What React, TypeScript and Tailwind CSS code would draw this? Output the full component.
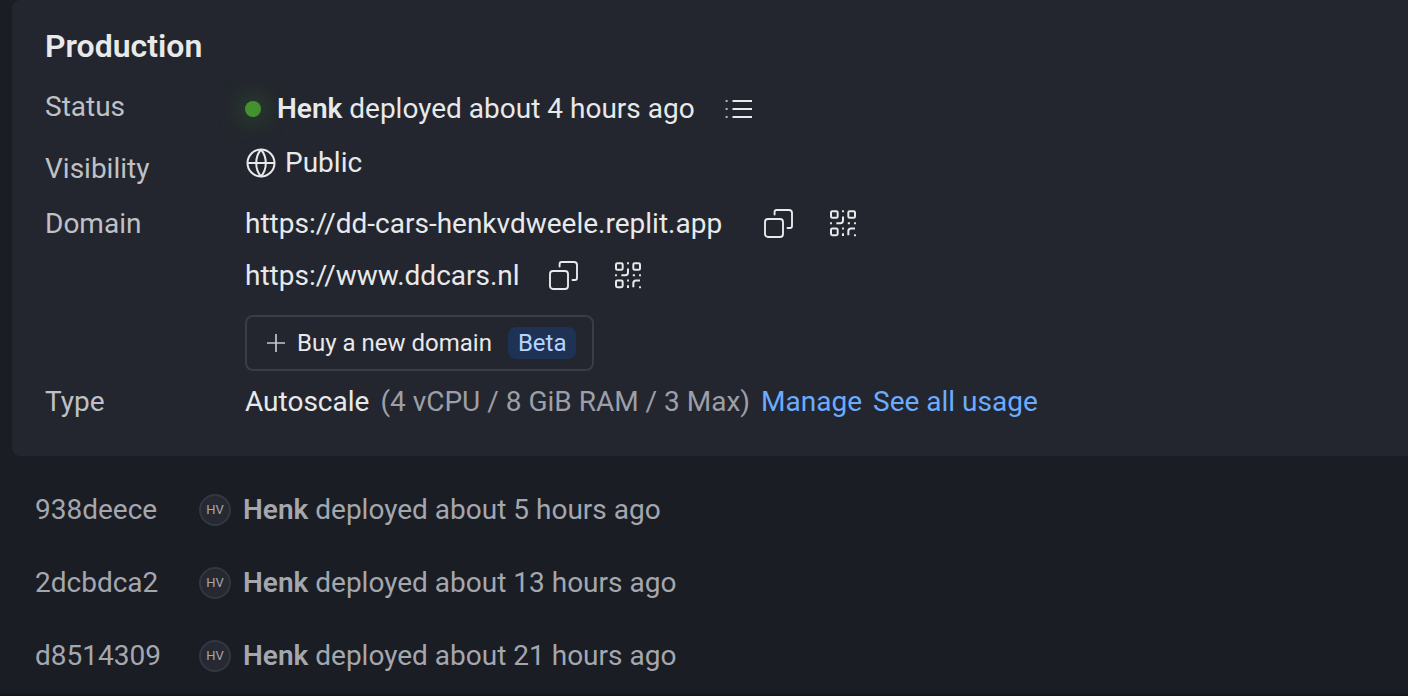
import type { ReactNode } from 'react';

function ListIcon() {
  return (
    <svg className="size-8" viewBox="0 0 32 32" fill="none" stroke="currentColor" strokeWidth="2" aria-hidden="true">
      <path d="M9.5 8H29M9.5 16H29M9.5 24H29" />
      <path strokeWidth="1.7" d="M2.6 8h2M2.6 16h2M2.6 24h2" />
    </svg>
  );
}

function GlobeIcon() {
  return (
    <svg className="size-8" viewBox="0 0 32 32" fill="none" stroke="currentColor" strokeWidth="2" aria-hidden="true">
      <circle cx="16" cy="16" r="13.5" />
      <path d="M2.5 16h27M16 2.5c-6.400 7.5-6.400 19.500 0 27M16 2.5c6.400 7.5 6.400 19.500 0 27" />
    </svg>
  );
}

function CopyIcon() {
  return (
    <svg className="size-8" viewBox="0 0 32 32" fill="none" stroke="currentColor" strokeWidth="1.9" strokeLinecap="round" aria-hidden="true">
      <rect x="2" y="11" width="18" height="18" rx="3" />
      <path d="M11.600 6.500V4a2 2 0 0 1 2-2H26a3 3 0 0 1 3 3v13a2 2 0 0 1-2 2h-2.500" />
    </svg>
  );
}

function QrIcon() {
  return (
    <svg className="size-8" viewBox="0 0 24 24" fill="none" stroke="currentColor" strokeWidth="1.5" aria-hidden="true">
      <g transform="translate(0 -0.6)">
        <rect x="3" y="3" width="5" height="5" rx="1" />
        <rect x="16" y="3" width="5" height="5" rx="1" />
        <rect x="3" y="16" width="5" height="5" rx="1" />
        <path d="M21 16h-3a2 2 0 0 0-2 2v3M12 7v3a2 2 0 0 1-2 2H7" />
        <path d="M20.300 21h1.400M2.300 12h1.400M11.300 3h1.400M11.300 16h1.400M15.600 12h1.600M20.300 12h1.400M12 19.600v2" />
      </g>
    </svg>
  );
}

function IconButton({ label, children }: { label: string; children: ReactNode }) {
  return (
    <button type="button" aria-label={label} className="shrink-0 cursor-pointer">
      {children}
    </button>
  );
}

function DomainLine({ url, width }: { url: string; width: string }) {
  return (
    <div className="flex items-center gap-6">
      <a href={url} className={`leading-9 ${width}`}>{url}</a>
      <div className="flex gap-8">
        <IconButton label="Copy link"><CopyIcon /></IconButton>
        <IconButton label="Show QR code"><QrIcon /></IconButton>
      </div>
    </div>
  );
}

const history = [
  { id: '938deece', when: '5 hours ago' },
  { id: '2dcbdca2', when: '13 hours ago' },
  { id: 'd8514309', when: '21 hours ago' },
];

export default function App() {
  return (
    <main className="min-h-screen border-b-2 border-[#181420] bg-[#1a1d24] pl-3 font-[Roboto,sans-serif] text-[28px] leading-9 text-[#e8e9eb]">
      <section className="rounded-l-lg bg-[#23262e] px-[33px] pt-[26px] pb-9">
        <h1 className="text-[32px] leading-10 font-semibold">Production</h1>
        <dl className="mt-[23px] grid grid-cols-[200px_1fr]">
          <dt className="text-[#bfc1c7]">Status</dt>
          <dd className="flex items-center gap-4 leading-10">
            <span className="size-4 rounded-full bg-[#43922f] shadow-[0_0_24px_4px_#43922f60]" />
            <span><strong className="font-semibold">Henk</strong> deployed about 4 hours ago</span>
            <span className="flex pl-3"><IconButton label="Deployment logs"><ListIcon /></IconButton></span>
          </dd>
          <dt className="pt-[22px] text-[#bfc1c7]">Visibility</dt>
          <dd className="flex items-center gap-2 self-start pt-4"><GlobeIcon />Public</dd>
          <dt className="pt-[19px] text-[#bfc1c7]">Domain</dt>
          <dd className="flex flex-col items-start gap-4 pt-[19px]">
            <DomainLine url="https://dd-cars-henkvdweele.replit.app" width="min-w-[494px]" />
            <DomainLine url="https://www.ddcars.nl" width="min-w-[279px]" />
            <button type="button" className="mt-[5px] flex h-14 cursor-pointer items-center rounded-lg border-2 border-[#3a3d46] pr-4 pl-[18px] text-2xl">
              <svg className="mr-2 size-6" viewBox="0 0 24 24" stroke="#c4c6cb" strokeWidth="1.7" aria-hidden="true"><path d="M2 12h18M11 3v18" /></svg>
              Buy a new domain
              <span className="ml-4 rounded-lg bg-[#1e3256] px-2.5 leading-8 text-[#b5d5ff]">Beta</span>
            </button>
          </dd>
          <dt className="pt-[13px] text-[#bfc1c7]">Type</dt>
          <dd className="flex gap-[11px] pt-[13px]">
            <span>Autoscale</span>
            <span className="text-[#9d9fa8]">(4 vCPU / 8 GiB RAM / 3 Max)</span>
            <a href="#manage" className="text-[#6bacff]">Manage</a>
            <a href="#usage" className="text-[#6bacff]">See all usage</a>
          </dd>
        </dl>
      </section>
      <ul className="flex flex-col gap-[37px] pt-9 pl-[23px] text-[#a5a7af]">
        {history.map(({ id, when }) => (
          <li key={id} className="flex items-center">
            <span className="w-[164px]">{id}</span>
            <span className="mr-3 flex size-8 items-center justify-center rounded-full border-2 border-[#343740] bg-[#262932] text-[13px]">HV</span>
            <span><strong className="font-semibold">Henk</strong> deployed about {when}</span>
          </li>
        ))}
      </ul>
    </main>
  );
}
